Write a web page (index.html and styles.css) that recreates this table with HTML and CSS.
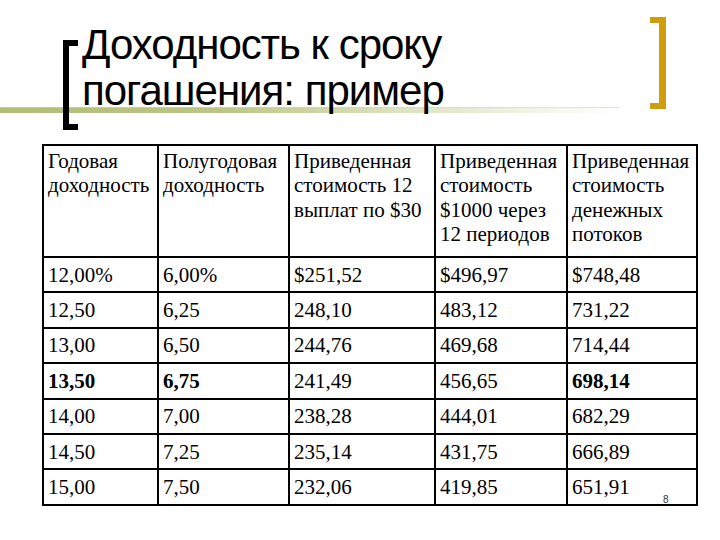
FILE: index.html
```html
<!DOCTYPE html>
<html lang="ru">
<head>
<meta charset="utf-8">
<title>Доходность к сроку погашения: пример</title>
<link rel="stylesheet" href="styles.css">
</head>
<body>
<div class="slide">
  <div class="rule"></div>
  <div class="bracket-left"></div>
  <div class="bracket-right"></div>
  <h1 class="title">Доходность к сроку<br>погашения: пример</h1>
  <table class="yield">
    <colgroup>
      <col class="c1"><col class="c2"><col class="c3"><col class="c4"><col class="c5">
    </colgroup>
    <thead>
      <tr>
        <th>Годовая доходность</th>
        <th>Полугодовая доходность</th>
        <th>Приведенная стоимость 12 выплат по $30</th>
        <th>Приведенная стоимость $1000 через 12 периодов</th>
        <th>Приведенная стоимость денежных потоков</th>
      </tr>
    </thead>
    <tbody>
      <tr><td>12,00%</td><td>6,00%</td><td>$251,52</td><td>$496,97</td><td>$748,48</td></tr>
      <tr><td>12,50</td><td>6,25</td><td>248,10</td><td>483,12</td><td>731,22</td></tr>
      <tr><td>13,00</td><td>6,50</td><td>244,76</td><td>469,68</td><td>714,44</td></tr>
      <tr><td class="b">13,50</td><td class="b">6,75</td><td>241,49</td><td>456,65</td><td class="b">698,14</td></tr>
      <tr><td>14,00</td><td>7,00</td><td>238,28</td><td>444,01</td><td>682,29</td></tr>
      <tr><td>14,50</td><td>7,25</td><td>235,14</td><td>431,75</td><td>666,89</td></tr>
      <tr><td>15,00</td><td>7,50</td><td>232,06</td><td>419,85</td><td>651,91</td></tr>
    </tbody>
  </table>
  <div class="page-num">8</div>
</div>
</body>
</html>
```
FILE: styles.css
```css
html, body {
  margin: 0;
  padding: 0;
  background: #fff;
}
.slide {
  position: relative;
  width: 720px;
  height: 540px;
  overflow: hidden;
  font-family: "Liberation Serif", "Times New Roman", serif;
  color: #000;
}
.rule {
  position: absolute;
  left: 0;
  top: 107px;
  width: 620px;
  height: 6px;
  background: linear-gradient(to right, #b3bd76 0%, #bcc585 35%, rgba(200, 207, 150, 0.6) 65%, rgba(255, 255, 255, 0) 100%);
  border-top: 1px solid rgba(210, 216, 170, 0.6);
  box-sizing: border-box;
}
.bracket-left {
  position: absolute;
  left: 63px;
  top: 40px;
  width: 9px;
  height: 78px;
  border-left: 6px solid #000;
  border-top: 6px solid #000;
  border-bottom: 6px solid #000;
}
.bracket-right {
  position: absolute;
  left: 650px;
  top: 17px;
  width: 9px;
  height: 80px;
  border-right: 7px solid #d09d0c;
  border-top: 6px solid #d09d0c;
  border-bottom: 6px solid #d09d0c;
}
.title {
  position: relative;
  margin: 0;
  padding: 22px 0 0 82px;
  font-family: "Liberation Sans", Arial, sans-serif;
  font-weight: normal;
  font-size: 42px;
  line-height: 46px;
  letter-spacing: -1px;
  height: 144px;
  box-sizing: border-box;
}
.yield {
  margin-left: 42px;
  width: 654px;
  border-collapse: collapse;
  table-layout: fixed;
  font-size: 21px;
}
.c1 { width: 115px; }
.c2 { width: 131px; }
.c3 { width: 146px; }
.c4 { width: 132px; }
.c5 { width: 130px; }
.yield th,
.yield td {
  border: 2px solid #000;
  padding: 0 3px 0 4px;
  text-align: left;
}
.yield th {
  font-weight: normal;
  vertical-align: top;
  height: 112px;
  box-sizing: border-box;
  padding-top: 3px;
  line-height: 24.3px;
}
.yield td {
  height: 35.4px;
  box-sizing: border-box;
  line-height: 22px;
  vertical-align: middle;
}
.yield td.b {
  font-weight: bold;
}
.page-num {
  position: absolute;
  left: 663px;
  top: 494px;
  font-family: "Liberation Sans", Arial, sans-serif;
  font-size: 10px;
  color: #333;
}
```
